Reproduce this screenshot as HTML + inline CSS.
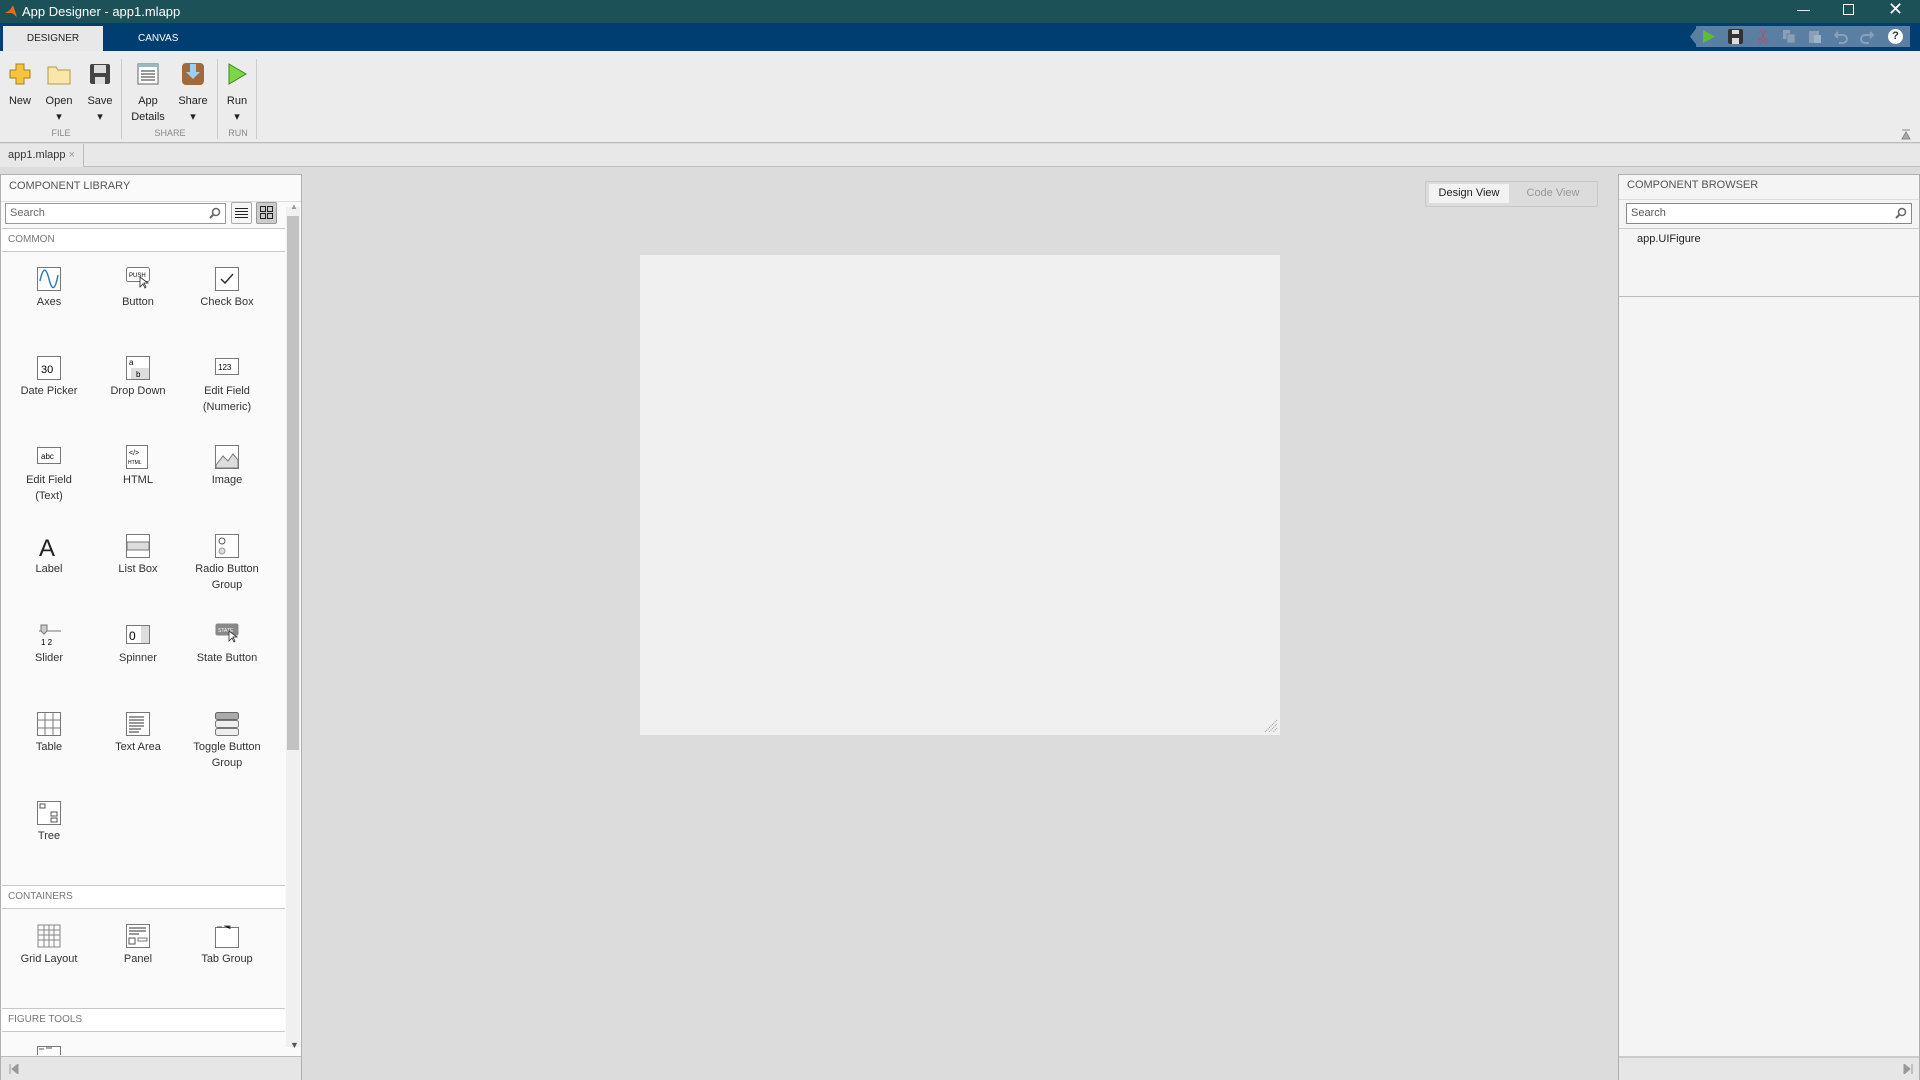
<!DOCTYPE html>
<html><head><meta charset="utf-8">
<style>
*{box-sizing:border-box;margin:0;padding:0}
body{width:1920px;height:1080px;overflow:hidden;background:#dcdcdc;font-family:"Segoe UI","Liberation Sans",sans-serif;position:relative;color:#333}
.abs{position:absolute}
.title{left:0;top:0;width:1920px;height:23px;background:#1d5158;color:#fff;font-size:13px;line-height:23px;padding-left:22px}
.tabs{left:0;top:23px;width:1920px;height:28px;background:#003e72}
.ribbon{left:0;top:51px;width:1920px;height:92px;background:#ececec;border-bottom:1px solid #b9b9b9}
.rb{position:absolute;font-size:11px;text-align:center;color:#222;line-height:16px}
.grp{position:absolute;top:128px;font-size:9px;color:#888;text-align:center}
.doctab{left:0;top:144px;width:1920px;height:23px;background:#e8e8e8;border-bottom:1px solid #c0c0c0}
.lp{left:0;top:174px;width:302px;height:906px;background:#fafafa;border:1px solid #b0b0b0}
.hdr{position:absolute;font-size:11px;color:#555;left:8px}
.sec{position:absolute;left:1px;width:283px;height:24px;background:#fff;border-top:1px solid #c8c8c8;border-bottom:1px solid #c8c8c8;font-size:10px;color:#777;padding-left:6px;line-height:22px}
.it{position:absolute;width:90px;text-align:center;font-size:11px;color:#333;line-height:16px}
.it svg{display:block;margin:0 auto 3px}
.qa{position:absolute;top:6px}
</style></head><body>
<div class="abs title"><svg class="abs" style="left:4px;top:4px" width="14" height="14"><path d="M1 9 L6 6 L9 1 L13 13 L8 9Z" fill="#e86a1b"/></svg>App Designer - app1.mlapp</div>
<div class="abs tabs">
 <div class="abs" style="left:3px;top:3px;width:100px;height:25px;background:#e8e8e8;font-size:10px;text-align:center;line-height:25px;color:#222">DESIGNER</div>
 <div class="abs" style="left:138px;top:3px;font-size:10px;line-height:25px;color:#fff">CANVAS</div>
 <div class="abs" style="left:1696px;top:3px;width:214px;height:21px;background:#5a7fa3"></div>
 <svg class="abs" style="left:1690px;top:3px" width="8" height="21"><path d="M8 0L0 10.5L8 21z" fill="#5a7fa3"/></svg>
 <svg class="abs" style="left:1702px;top:6px" width="14" height="15"><path d="M1 1 L13 7.5 L1 14Z" fill="#5cc02c"/></svg>
 <svg class="abs" style="left:1728px;top:6px" width="15" height="15"><rect x="0" y="0" width="15" height="15" rx="2" fill="#333"/><rect x="4" y="1" width="7" height="4" fill="#ddd"/><rect x="4" y="9" width="7" height="6" fill="#ddd"/></svg>
 <svg class="qa" style="left:1756px" width="14" height="15"><path d="M4 1L9 10M10 1L5 10" stroke="#a56" fill="none"/><circle cx="4" cy="12" r="2" fill="none" stroke="#a56"/><circle cx="10" cy="12" r="2" fill="none" stroke="#a56"/></svg>
 <svg class="qa" style="left:1782px" width="14" height="15"><rect x="1" y="1" width="7" height="9" fill="#8aa0b8"/><rect x="5" y="5" width="8" height="9" fill="#8aa0b8" stroke="#6a829c"/></svg>
 <svg class="qa" style="left:1808px" width="14" height="15"><rect x="1" y="2" width="10" height="12" fill="#8aa0b8"/><rect x="6" y="6" width="7" height="8" fill="#a0b4c8"/></svg>
 <svg class="qa" style="left:1834px" width="14" height="15"><path d="M4 3L1 6L4 9M1 6h8a4 4 0 0 1 0 8H5" fill="none" stroke="#8aa0b8" stroke-width="2"/></svg>
 <svg class="qa" style="left:1860px" width="14" height="15"><path d="M10 3L13 6L10 9M13 6H5a4 4 0 0 0 0 8h4" fill="none" stroke="#8aa0b8" stroke-width="2"/></svg>
 <div class="abs" style="left:1888px;top:6px;width:15px;height:15px;border-radius:50%;background:#fff;color:#234;font-size:11px;font-weight:bold;text-align:center;line-height:15px">?</div>
</div>
<div class="abs" style="left:1797px;top:2px;color:#fff;font-size:13px">—</div>
<div class="abs" style="left:1843px;top:4px;width:11px;height:11px;border:1.5px solid #fff"></div>
<div class="abs" style="left:1888px;top:-1px;color:#fff;font-size:18px">✕</div>

<div class="abs ribbon">
 <svg class="abs" style="left:9px;top:12px" width="22" height="22"><path d="M7 1h8v6h6v8h-6v6H7v-6H1V7h6z" fill="#f4c53c" stroke="#a8801c"/></svg>
 <svg class="abs" style="left:47px;top:14px" width="24" height="20"><path d="M1 2h8l2 3h12v14H1z" fill="#f8e7a6" stroke="#b59a4c"/></svg>
 <svg class="abs" style="left:89px;top:12px" width="22" height="22"><rect x="1" y="1" width="20" height="20" rx="2" fill="#444"/><rect x="5" y="2" width="12" height="8" fill="#ddd"/><rect x="6" y="14" width="10" height="7" fill="#ddd"/></svg>
 <svg class="abs" style="left:137px;top:12px" width="22" height="22"><rect x="1" y="1" width="20" height="20" fill="#fff" stroke="#666"/><rect x="1" y="1" width="20" height="3" fill="#9bb"/><path d="M4 8h14M4 11h14M4 14h14M4 17h14" stroke="#333"/></svg>
 <svg class="abs" style="left:181px;top:11px" width="24" height="24"><rect x="1" y="1" width="22" height="22" rx="4" fill="#a06a3c"/><path d="M9 2h6v8h4l-7 7-7-7h4z" fill="#9cd0f0"/></svg>
 <svg class="abs" style="left:227px;top:12px" width="20" height="22"><path d="M2 1 L19 11 L2 21Z" fill="#7cd648" stroke="#3d8a1c"/></svg>
 <div class="rb" style="left:4px;top:42px;width:32px">New</div>
 <div class="rb" style="left:40px;top:42px;width:38px">Open<br>▾</div>
 <div class="rb" style="left:83px;top:42px;width:34px">Save<br>▾</div>
 <div class="rb" style="left:128px;top:42px;width:40px">App<br>Details</div>
 <div class="rb" style="left:174px;top:42px;width:38px">Share<br>▾</div>
 <div class="rb" style="left:220px;top:42px;width:34px">Run<br>▾</div>
 <div class="abs" style="left:121px;top:8px;width:1px;height:80px;background:#ccc"></div>
 <div class="abs" style="left:217px;top:8px;width:1px;height:80px;background:#ccc"></div>
 <div class="abs" style="left:256px;top:8px;width:1px;height:80px;background:#ccc"></div>
</div>
<div class="grp" style="left:50px;width:22px">FILE</div>
<div class="grp" style="left:150px;width:40px">SHARE</div>
<div class="grp" style="left:225px;width:26px">RUN</div>
<div class="abs doctab"><div class="abs" style="left:0;top:0;width:84px;height:23px;background:#e8e8e8;border-right:1px solid #bbb;font-size:11px;line-height:22px;padding-left:8px">app1.mlapp <span style="color:#999">×</span></div></div>

<div class="abs lp">
 <div class="hdr" style="top:5px">COMPONENT LIBRARY</div>
 <div class="abs" style="left:0;top:26px;width:300px;height:1px;background:#ddd"></div>
 <div class="abs" style="left:4px;top:28px;width:221px;height:21px;background:#fff;border:1px solid #999;font-size:11px;color:#666;padding-left:4px;line-height:19px">Search</div>
 <svg class="abs" style="left:208px;top:32px" width="12" height="12"><circle cx="7" cy="5" r="3.5" fill="none" stroke="#666" stroke-width="1.5"/><path d="M4.5 7.5L1 11" stroke="#666" stroke-width="2"/></svg>
 <div class="abs" style="left:230px;top:27px;width:21px;height:22px;border:1px solid #aaa;border-radius:2px;background:#f5f5f5"></div>
 <svg class="abs" style="left:234px;top:32px" width="13" height="12"><path d="M0 1.5h13M0 4.5h13M0 7.5h13M0 10.5h13" stroke="#222"/></svg>
 <div class="abs" style="left:255px;top:27px;width:21px;height:22px;border:1px solid #999;border-radius:2px;background:#ccc"></div>
 <svg class="abs" style="left:259px;top:31px" width="13" height="13"><rect x=".5" y=".5" width="5" height="5" fill="none" stroke="#222"/><rect x="7.5" y=".5" width="5" height="5" fill="none" stroke="#222"/><rect x=".5" y="7.5" width="5" height="5" fill="none" stroke="#222"/><rect x="7.5" y="7.5" width="5" height="5" fill="none" stroke="#222"/></svg>
 <div class="abs" style="left:285px;top:32px;width:14px;height:840px;background:#f0f0f0"></div>
 <div class="abs" style="left:286px;top:41px;width:12px;height:534px;background:#c2c2c2"></div>
 <div class="sec" style="top:53px">COMMON</div>
 <div class="sec" style="top:710px">CONTAINERS</div>
 <div class="sec" style="top:833px">FIGURE TOOLS</div>
 <div class="abs" style="left:0;top:881px;width:300px;height:24px;background:#e6e6e6;border-top:1px solid #bbb"></div>
</div>

<div class="it" style="left:4px;top:267px"><svg width="24" height="24"><rect x=".5" y=".5" width="23" height="23" fill="#fff" stroke="#777"/><path d="M3 14 C6 0 9 0 12 12 S18 24 21 8" fill="none" stroke="#2a7ac0" stroke-width="1.5"/></svg>Axes</div>
<div class="it" style="left:93px;top:267px"><svg width="24" height="24"><rect x=".5" y=".5" width="23" height="14" rx="2" fill="#fff" stroke="#777"/><text x="3" y="10" font-size="6" font-family="Liberation Sans">PUSH</text><path d="M14 10v10l3-3 2 4 1-1-2-4h4z" fill="#fff" stroke="#222" stroke-width=".8"/></svg>Button</div>
<div class="it" style="left:182px;top:267px"><svg width="24" height="24"><rect x=".5" y=".5" width="23" height="23" fill="#fff" stroke="#777"/><path d="M6 12l4 4 8-9" fill="none" stroke="#333" stroke-width="1.5"/></svg>Check Box</div>
<div class="it" style="left:4px;top:356px"><svg width="24" height="24"><rect x=".5" y=".5" width="23" height="23" fill="#fff" stroke="#777"/><text x="4" y="17" font-size="11" font-family="Liberation Sans">30</text></svg>Date Picker</div>
<div class="it" style="left:93px;top:356px"><svg width="24" height="24"><rect x=".5" y=".5" width="23" height="23" fill="#fff" stroke="#777"/><rect x="5" y="12" width="18" height="11" fill="#ddd"/><text x="3" y="9" font-size="8">a</text><text x="10" y="21" font-size="8">b</text></svg>Drop Down</div>
<div class="it" style="left:182px;top:356px"><svg width="24" height="24"><rect x=".5" y="2.5" width="23" height="16" fill="#fff" stroke="#777"/><text x="3" y="14" font-size="8">123</text></svg>Edit Field<br>(Numeric)</div>
<div class="it" style="left:4px;top:445px"><svg width="24" height="24"><rect x=".5" y="2.5" width="23" height="16" fill="#fff" stroke="#777"/><text x="4" y="14" font-size="8">abc</text></svg>Edit Field<br>(Text)</div>
<div class="it" style="left:93px;top:445px"><svg width="24" height="24"><rect x=".5" y=".5" width="21" height="23" fill="#fff" stroke="#777"/><text x="3" y="10" font-size="7">&lt;/&gt;</text><text x="2" y="19" font-size="5">HTML</text></svg>HTML</div>
<div class="it" style="left:182px;top:445px"><svg width="24" height="24"><rect x=".5" y=".5" width="23" height="23" fill="#fff" stroke="#777"/><path d="M1 20 L8 11 L13 16 L18 9 L23 15 V23 H1Z" fill="#ddd" stroke="#777"/></svg>Image</div>
<div class="it" style="left:4px;top:534px"><svg width="24" height="24"><text x="2" y="22" font-size="24" font-family="Liberation Sans" fill="#222">A</text></svg>Label</div>
<div class="it" style="left:93px;top:534px"><svg width="24" height="24"><rect x=".5" y=".5" width="23" height="23" fill="#fff" stroke="#777"/><rect x="1" y="8" width="22" height="8" fill="#ddd" stroke="#777"/></svg>List Box</div>
<div class="it" style="left:182px;top:534px"><svg width="24" height="24"><rect x=".5" y=".5" width="23" height="23" fill="#fff" stroke="#777"/><circle cx="7" cy="7" r="3" fill="none" stroke="#555"/><circle cx="7" cy="17" r="3" fill="#ddd" stroke="#999"/></svg>Radio Button<br>Group</div>
<div class="it" style="left:4px;top:623px"><svg width="24" height="24"><path d="M2 8h22" stroke="#777"/><path d="M4 2h6v6l-3 3-3-3z" fill="#ccc" stroke="#777"/><text x="4" y="22" font-size="8">1 2</text></svg>Slider</div>
<div class="it" style="left:93px;top:623px"><svg width="24" height="24"><rect x=".5" y="2.5" width="23" height="18" fill="#fff" stroke="#777"/><rect x="15" y="3" width="8" height="17" fill="#ddd"/><text x="3" y="17" font-size="12">0</text></svg>Spinner</div>
<div class="it" style="left:182px;top:623px"><svg width="24" height="24"><rect x=".5" y=".5" width="23" height="12" rx="2" fill="#888"/><text x="3" y="9" font-size="5" fill="#fff">STATE</text><path d="M14 8v10l3-3 2 4 1-1-2-4h4z" fill="#fff" stroke="#222" stroke-width=".8"/></svg>State Button</div>
<div class="it" style="left:4px;top:712px"><svg width="24" height="24"><rect x=".5" y=".5" width="23" height="23" fill="#fff" stroke="#777"/><path d="M1 8h22M1 16h22M8 1v22M16 1v22" stroke="#777"/></svg>Table</div>
<div class="it" style="left:93px;top:712px"><svg width="24" height="24"><rect x=".5" y=".5" width="23" height="23" fill="#fff" stroke="#777"/><path d="M3 5h15M3 8h15M3 11h15M3 14h15M3 17h12M3 20h10" stroke="#333"/></svg>Text Area</div>
<div class="it" style="left:182px;top:712px"><svg width="24" height="24"><rect x=".5" y=".5" width="23" height="7" rx="2" fill="#aaa" stroke="#666"/><rect x=".5" y="8.5" width="23" height="7" rx="2" fill="#eee" stroke="#777"/><rect x=".5" y="16.5" width="23" height="7" rx="2" fill="#eee" stroke="#777"/></svg>Toggle Button<br>Group</div>
<div class="it" style="left:4px;top:801px"><svg width="24" height="24"><rect x=".5" y=".5" width="23" height="23" fill="#fff" stroke="#777"/><rect x="3" y="3" width="5" height="4" fill="none" stroke="#555"/><rect x="14" y="11" width="6" height="4" fill="none" stroke="#555"/><rect x="14" y="17" width="6" height="4" fill="none" stroke="#555"/></svg>Tree</div>
<div class="it" style="left:4px;top:924px"><svg width="24" height="24"><path d="M1 1h22v22H1zM1 6h22M1 11h22M1 16h22M7 1v22M12 1v22M17 1v22" fill="none" stroke="#888"/></svg>Grid Layout</div>
<div class="it" style="left:93px;top:924px"><svg width="24" height="24"><rect x=".5" y=".5" width="23" height="23" fill="#fff" stroke="#777"/><path d="M3 4h17M3 7h17M3 10h10" stroke="#333"/><rect x="3" y="14" width="6" height="6" fill="none" stroke="#555"/><rect x="12" y="14" width="9" height="3" fill="none" stroke="#777"/></svg>Panel</div>
<div class="it" style="left:182px;top:924px"><svg width="24" height="24"><rect x=".5" y="3.5" width="23" height="20" fill="#fff" stroke="#777"/><path d="M2 3h5M9 2h6v3" stroke="#555"/></svg>Tab Group</div>
<svg class="abs" style="left:37px;top:1046px" width="24" height="9"><rect x=".5" y=".5" width="23" height="10" fill="#fff" stroke="#777"/><path d="M2 3h5M9 2h6" stroke="#555"/></svg>
<svg class="abs" style="left:9px;top:1064px" width="10" height="10"><path d="M1 0v10M9 0v10L3 5z" stroke="#999" fill="#999"/></svg>
<div class="abs" style="left:290px;top:1040px;font-size:9px;color:#555">▼</div>
<div class="abs" style="left:290px;top:202px;font-size:8px;color:#999">▲</div>

<div class="abs" style="left:640px;top:255px;width:640px;height:480px;background:#f0f0f0"></div>
<svg class="abs" style="left:1264px;top:719px" width="14" height="14"><path d="M13 1L1 13M13 5L5 13M13 9L9 13" stroke="#999" stroke-dasharray="1 1"/></svg>

<div class="abs" style="left:1425px;top:181px;width:173px;height:26px;border:1px solid #c8c8c8;border-radius:2px"></div>
<div class="abs" style="left:1429px;top:184px;width:80px;height:19px;background:#f2f2f2;font-size:11px;text-align:center;line-height:19px;color:#222">Design View</div>
<div class="abs" style="left:1515px;top:184px;width:76px;height:19px;font-size:11px;text-align:center;line-height:19px;color:#999">Code View</div>

<div class="abs" style="left:1618px;top:174px;width:302px;height:906px;background:#f4f4f4;border:1px solid #b0b0b0">
 <div class="hdr" style="top:4px">COMPONENT BROWSER</div>
 <div class="abs" style="left:0;top:24px;width:300px;height:1px;background:#ddd"></div>
 <div class="abs" style="left:7px;top:28px;width:286px;height:21px;background:#fff;border:1px solid #888;font-size:11px;color:#555;padding-left:4px;line-height:19px">Search</div>
 <svg class="abs" style="left:276px;top:32px" width="12" height="12"><circle cx="7" cy="5" r="3.5" fill="none" stroke="#666" stroke-width="1.5"/><path d="M4.5 7.5L1 11" stroke="#666" stroke-width="2"/></svg>
 <div class="abs" style="left:0;top:53px;width:300px;height:1px;background:#ccc"></div>
 <div class="abs" style="left:18px;top:58px;font-size:11px;color:#222">app.UIFigure</div>
 <div class="abs" style="left:0;top:121px;width:300px;height:1px;background:#bbb"></div>
 <div class="abs" style="left:0;top:881px;width:300px;height:24px;background:#e6e6e6;border-top:2px solid #ccc"></div>
 <svg class="abs" style="left:284px;top:889px" width="10" height="10"><path d="M1 0L7 5L1 10zM9 0v10" stroke="#999" fill="#999"/></svg>
</div>
<svg class="abs" style="left:1901px;top:129px" width="10" height="12"><path d="M1 1h8M5 3L1 10h8z" stroke="#888" fill="#aaa"/></svg>
</body></html>
